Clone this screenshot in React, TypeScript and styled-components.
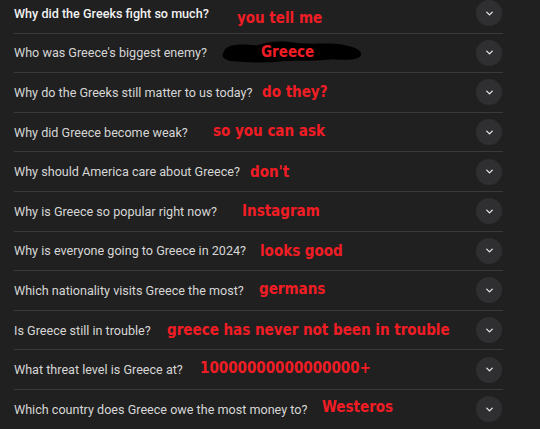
import React from "react";
import styled, { createGlobalStyle } from "styled-components";

const GlobalStyle = createGlobalStyle`
    html, body {
        margin: 0;
        padding: 0;
        background: #202020;
        overflow: hidden;
    }
`;

type Item = {
    question: string;
    note: string;
    noteX: number;
    noteDy: number;
    active?: boolean;
    redacted?: boolean;
};

const items: Item[] = [
    { question: "Why did the Greeks fight so much?", note: "you tell me", noteX: 237, noteDy: 5, active: true },
    { question: "Who was Greece's biggest enemy?", note: "Greece", noteX: 261, noteDy: -1, redacted: true },
    { question: "Why do the Greeks still matter to us today?", note: "do they?", noteX: 262, noteDy: 0 },
    { question: "Why did Greece become weak?", note: "so you can ask", noteX: 213, noteDy: -1 },
    { question: "Why should America care about Greece?", note: "don't", noteX: 250, noteDy: 0 },
    { question: "Why is Greece so popular right now?", note: "Instagram", noteX: 242, noteDy: 0 },
    { question: "Why is everyone going to Greece in 2024?", note: "looks good", noteX: 260, noteDy: 0 },
    { question: "Which nationality visits Greece the most?", note: "germans", noteX: 259, noteDy: -1 },
    { question: "Is Greece still in trouble?", note: "greece has never not been in trouble", noteX: 167, noteDy: 0 },
    { question: "What threat level is Greece at?", note: "10000000000000000+", noteX: 200, noteDy: -2 },
    { question: "Which country does Greece owe the most money to?", note: "Westeros", noteX: 322, noteDy: -2 },
];

const LIST_LEFT = 14;

export default function App() {
    return (
        <Page>
            <GlobalStyle />
            <List>
                {items.map((item) => (
                    <Row key={item.question}>
                        <Question $active={item.active}>{item.question}</Question>
                        {item.redacted && (
                            <Scribble viewBox="0 0 142 23" $x={221 - LIST_LEFT}>
                                <path
                                    d="M4 9 C10 3 22 4 36 5 C48 1 60 0 78 3 C96 4 112 2 124 5 C134 7 141 10 140 15 C137 20 126 20 112 19 C96 21 80 20 62 21 C44 23 26 22 12 21 C4 20 0 16 2 13 Z"
                                    fill="#000"
                                />
                            </Scribble>
                        )}
                        <Note $x={item.noteX - LIST_LEFT} $dy={item.noteDy}>
                            {item.note}
                        </Note>
                        <ExpandButton>
                            <svg width="11" height="11" viewBox="0 0 24 24" fill="none">
                                <path d="M6 9l6 6 6-6" stroke="#e3e3e3" strokeWidth="3" strokeLinecap="round" strokeLinejoin="round" />
                            </svg>
                        </ExpandButton>
                    </Row>
                ))}
            </List>
        </Page>
    );
}

const Page = styled.div`
    width: 540px;
    height: 429px;
    overflow: hidden;
    background: #202020;
`;

const List = styled.div`
    width: ${503 - LIST_LEFT}px;
    margin: -6px 0 0 ${LIST_LEFT}px;
    display: flex;
    flex-direction: column;
`;

const Row = styled.div`
    position: relative;
    height: 38.6px;
    display: flex;
    align-items: center;
    justify-content: space-between;
    border-bottom: 1px solid #3a3a3a;
`;

const Question = styled.span<{ $active?: boolean }>`
    font-family: Roboto, "Liberation Sans", sans-serif;
    font-size: 12.6px;
    color: ${({ $active }) => ($active ? "#f1f1f1" : "#d6d6d6")};
    font-weight: ${({ $active }) => ($active ? 500 : 400)};
    white-space: nowrap;
`;

const Note = styled.span<{ $x: number; $dy: number }>`
    position: absolute;
    left: ${({ $x }) => $x}px;
    top: 50%;
    transform: translateY(calc(-50% + ${({ $dy }) => $dy}px));
    font-family: "DejaVu Sans Condensed", "DejaVu Sans", sans-serif;
    font-stretch: condensed;
    font-weight: 700;
    font-size: 15px;
    color: #f21d24;
    white-space: nowrap;
`;

const Scribble = styled.svg<{ $x: number }>`
    position: absolute;
    left: ${({ $x }) => $x}px;
    top: 50%;
    width: 142px;
    height: 23px;
    transform: translateY(-55%);
`;

const ExpandButton = styled.div`
    width: 26px;
    height: 26px;
    margin-right: 1px;
    border-radius: 50%;
    background: #2f2f31;
    display: flex;
    align-items: center;
    justify-content: center;
    flex-shrink: 0;
`;
